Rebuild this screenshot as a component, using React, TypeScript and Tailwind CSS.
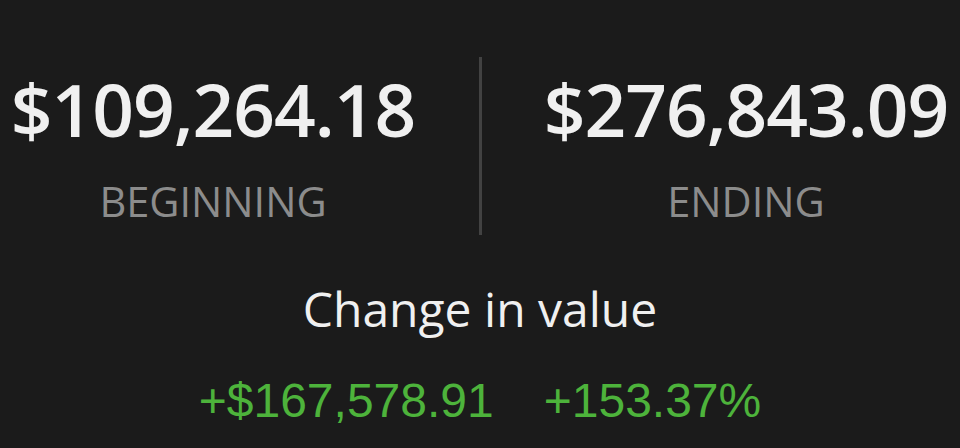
export default function App() {
  return (
    <div className="w-[960px] h-[448px] bg-[#1b1b1b] overflow-hidden flex flex-col items-center">
      <div className="w-full flex pt-[57px]">
        <div className="w-[426px] flex flex-col items-center pt-[15px]">
          <div className="font-['Open_Sans'] font-semibold text-[73px] leading-none tracking-[-0.014em] text-[#f0f0f0]">$109,264.18</div>
          <div className="mt-[36px] font-['Open_Sans'] text-[41.5px] leading-none text-[#8c8c8c]">BEGINNING</div>
        </div>
        <div className="ml-[53px] w-[3px] h-[178px] bg-[#424242]"></div>
        <div className="ml-[50px] flex-1 flex flex-col items-center pt-[15px]">
          <div className="font-['Open_Sans'] font-semibold text-[73px] leading-none tracking-[-0.014em] text-[#f0f0f0]">$276,843.09</div>
          <div className="mt-[36px] font-['Open_Sans'] text-[41.5px] leading-none text-[#8c8c8c]">ENDING</div>
        </div>
      </div>
      <div className="mt-[50px] font-['Open_Sans'] text-[48px] leading-none text-[#f0f0f0]">Change in value</div>
      <div className="mt-[44px] flex gap-[50px] font-['Liberation_Sans',Arial,sans-serif] text-[48px] leading-none text-[#4db33b]">
        <span>+$167,578.91</span>
        <span>+153.37%</span>
      </div>
    </div>
  );
}
